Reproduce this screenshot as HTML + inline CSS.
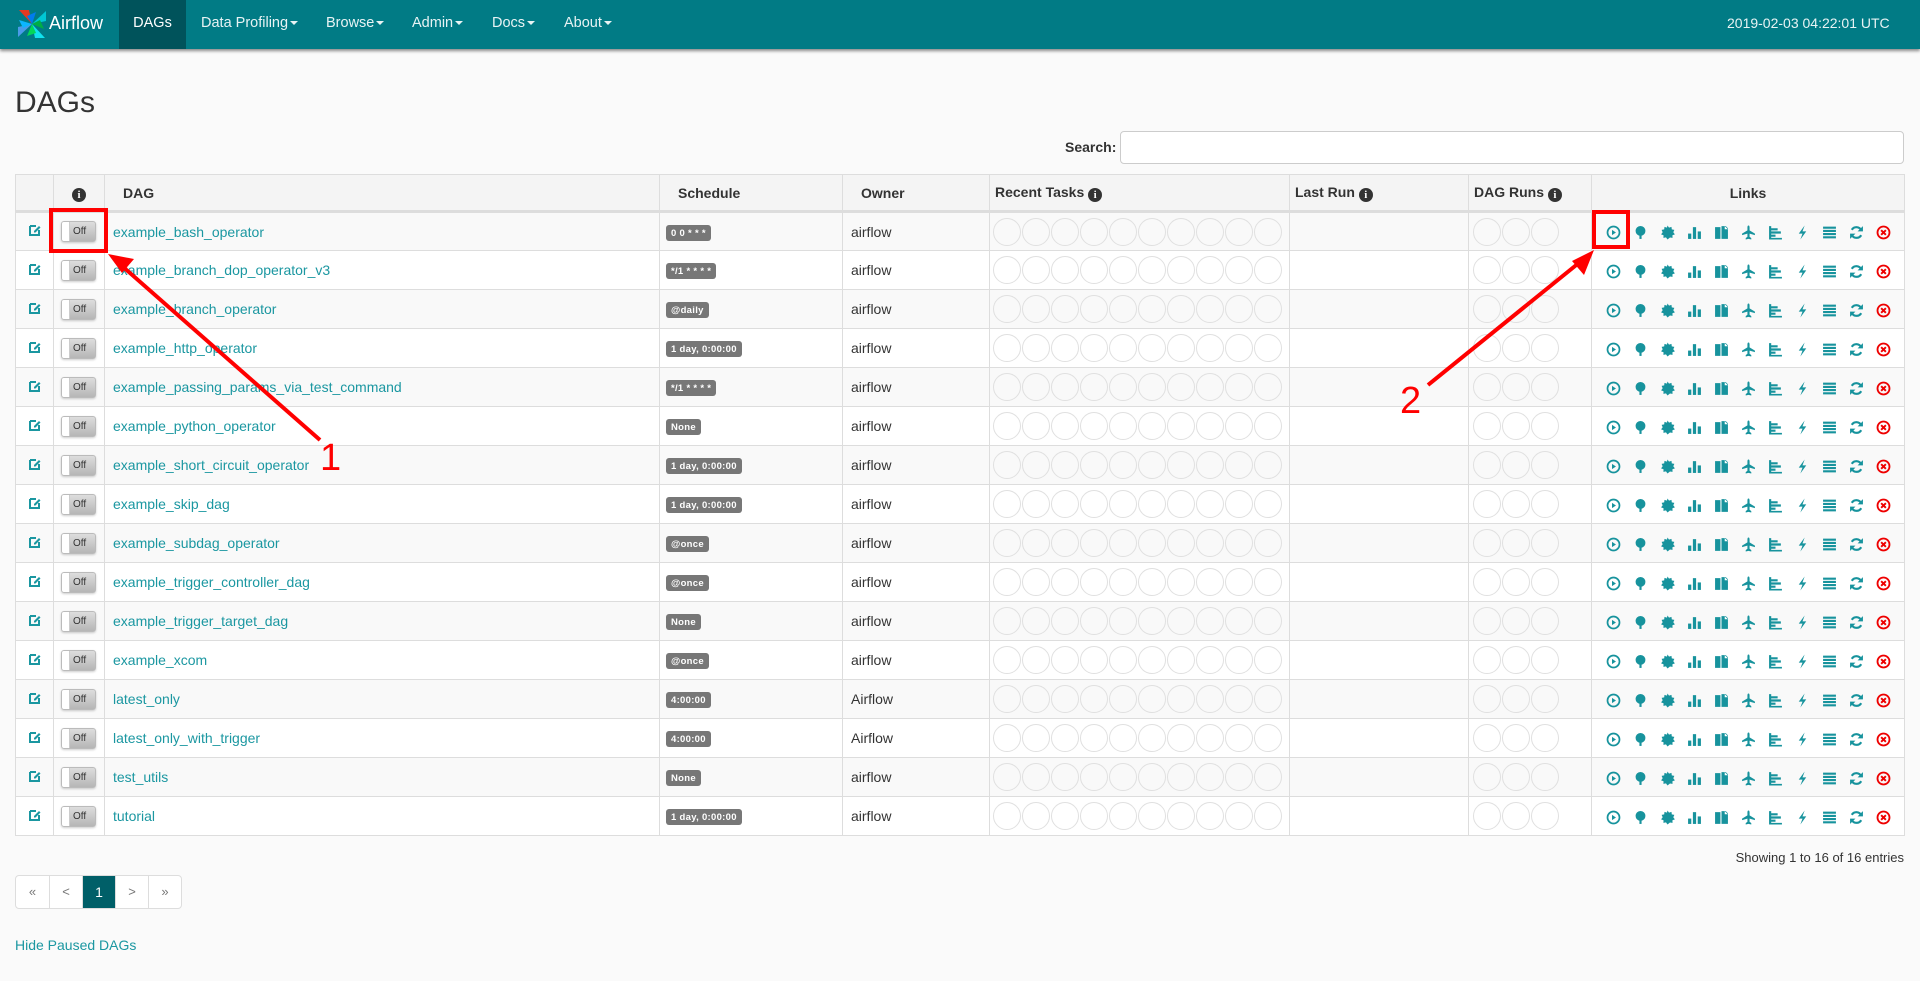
<!DOCTYPE html>
<html><head><meta charset="utf-8">
<style>
*{box-sizing:border-box}
body{margin:0;background:#fafafa;font-family:"Liberation Sans",Arial,sans-serif;font-size:14px;color:#333;width:1920px;height:981px;overflow:hidden;position:relative}
.nav{position:absolute;left:0;top:0;width:1920px;height:49px;background:#017b85;box-shadow:0 2px 3px rgba(0,0,0,.45)}
.nav a{position:absolute;top:0;height:49px;line-height:47px;color:#e8f3f4;font-size:14.5px;text-decoration:none}
.nav .act{background:#00535b;left:119px;width:67px;text-align:center;color:#fff}
.caret{display:inline-block;width:0;height:0;border-left:4px solid transparent;border-right:4px solid transparent;border-top:4px solid #e8f3f4;vertical-align:middle;margin-left:2px}
h1{position:absolute;left:15px;top:86px;margin:0;font-size:30px;font-weight:normal;color:#333}
.slabel{position:absolute;left:1065px;top:139px;font-weight:bold;font-size:14px}
.search{position:absolute;left:1120px;top:131px;width:784px;height:33px;background:#fff;border:1px solid #ccc;border-radius:4px}
table{position:absolute;left:15px;top:174px;border-collapse:collapse;table-layout:fixed;width:1889px}
th,td{border:1px solid #ddd;padding:0 8px;white-space:nowrap;overflow:hidden}
th{height:37px;background:#f4f4f4;font-size:14px;text-align:left;border-bottom:3px solid #ddd}
td{height:39px;background:#fff}
tr:nth-child(odd) td{background:#f9f9f9}
a.l{color:#1b97a1;text-decoration:none}
.tg{display:inline-block;width:35px;height:21px;margin-left:0;border:1px solid #bbb;border-radius:3px;background:linear-gradient(#ddd,#b6b6b6);position:relative;vertical-align:middle;box-shadow:0 1px 2px rgba(0,0,0,.2)}
.tg:before{content:"";position:absolute;left:0;top:0;width:7px;height:19px;background:#fff;border-right:1px solid #ccc;border-radius:2px 0 0 2px}
.tg span{position:absolute;left:11px;top:4px;font-size:10px;color:#333}
.lb{display:inline-block;background:#777;color:#fff;font-size:9.5px;font-weight:bold;padding:3px 5px 2px;border-radius:3px;letter-spacing:.3px}
.c{display:inline-block;width:28px;height:28px;border:1px solid #e0e0e0;border-radius:50%;margin-right:1px;vertical-align:middle}
.ic{display:inline-block;width:27px;text-align:center;vertical-align:middle}
.ic svg{width:15px;height:15px;vertical-align:middle}
.info{display:inline-block;width:14px;height:14px;border-radius:50%;background:#333;color:#fff;font-size:11px;font-weight:bold;text-align:center;line-height:14px;font-family:"Liberation Serif",serif;vertical-align:-1px}
.show{position:absolute;right:16px;top:850px;font-size:13px}
.pg{position:absolute;left:15px;top:875px;height:34px;display:flex;border:1px solid #ddd;border-radius:4px;background:#fff}
.pg div{width:33px;text-align:center;line-height:32px;color:#777;border-left:1px solid #ddd;font-size:13px}
.pg div:first-child{border-left:none}
.pg .a{background:#005f68;color:#fff;font-size:14px}
.hide{position:absolute;left:15px;top:937px;color:#1b97a1;font-size:14px}
</style></head><body>
<svg width="0" height="0" style="position:absolute">
<defs>
<symbol id="edit" viewBox="0 0 14 14"><path d="M2 3h6M2 3v9h9V7" fill="none" stroke="#1b97a1" stroke-width="2"/><path d="M6 8l5-5 1.5 1.5-5 5H6z" fill="#1b97a1"/></symbol>
<symbol id="i1" viewBox="0 0 14 14"><circle cx="7" cy="7" r="5.6" fill="none" stroke="#17939d" stroke-width="1.6"/><path d="M5.6 4.6v4.8L9.3 7z" fill="#17939d"/></symbol>
<symbol id="i2" viewBox="0 0 14 14"><circle cx="7" cy="5.5" r="4.6" fill="#17939d"/><rect x="6" y="8" width="2" height="5" fill="#17939d"/></symbol>
<symbol id="i3" viewBox="0 0 14 14"><path d="M7 0.5l1.4 2 2.3-.8.3 2.4 2.4.5-1 2.2 1.5 1.9-2.3.9.1 2.4-2.4-.3L7 13.5l-1.4-2-2.4.5.1-2.4-2.3-.9L2.5 6.8 1.5 4.6l2.4-.5.3-2.4 2.3.8z" fill="#17939d"/></symbol>
<symbol id="i4" viewBox="0 0 14 14"><rect x="1" y="8" width="3" height="5" fill="#17939d"/><rect x="5.5" y="2" width="3" height="11" fill="#17939d"/><rect x="10" y="6" width="3" height="7" fill="#17939d"/></symbol>
<symbol id="i5" viewBox="0 0 14 14"><path d="M1 2h5v11H1z M7 1h4l2 2v10H7z" fill="#17939d"/><path d="M10 1v3h3" fill="#fff"/></symbol>
<symbol id="i6" viewBox="0 0 14 14"><path d="M7 0.5c.8 0 1 1 1 2V5l5 3v1.5L8 8v3l1.6 1.3V13.5L7 13l-2.6.5v-1.2L6 11V8L1 9.5V8l5-3V2.5c0-1 .2-2 1-2z" fill="#17939d"/></symbol>
<symbol id="i7" viewBox="0 0 14 14"><path d="M1 1h2v12H1zM3 3h6v2H3zM3 6h9v2H3zM3 9h4v2H3zM1 12h12v1.5H1z" fill="#17939d"/></symbol>
<symbol id="i8" viewBox="0 0 14 14"><path d="M9 0.5L3.5 8H7l-2 5.5L10.5 6H7z" fill="#17939d"/></symbol>
<symbol id="i9" viewBox="0 0 14 14"><path d="M1 1.5h12v2H1zM1 4.5h12v2H1zM1 7.5h12v2H1zM1 10.5h12v2H1z" fill="#17939d"/></symbol>
<symbol id="i10" viewBox="0 0 14 14"><path d="M11.5 5A5 5 0 0 0 2.6 4.5" fill="none" stroke="#17939d" stroke-width="2"/><path d="M2.5 9a5 5 0 0 0 8.9.5" fill="none" stroke="#17939d" stroke-width="2"/><path d="M13 1v5H8z M1 13V8h5z" fill="#17939d"/></symbol>
<symbol id="i11" viewBox="0 0 14 14"><circle cx="7" cy="7" r="5.6" fill="none" stroke="#e00" stroke-width="1.7"/><path d="M4.8 4.8l4.4 4.4M9.2 4.8l-4.4 4.4" stroke="#e00" stroke-width="1.8"/></symbol>
</defs></svg>

<div class="nav">
<svg style="position:absolute;left:16px;top:8px" width="32" height="32" viewBox="0 0 32 32"><path d="M16 16L3 2l10 0z" fill="#e43921"/><path d="M16 16L30 3v10z" fill="#00c7d4"/><path d="M16 16L29 30H19z" fill="#11e1ee"/><path d="M16 16L2 29V19z" fill="#4a9be8"/><path d="M16 16L3 12l4 8z" fill="#0cb6ff"/><path d="M16 16l12 5-4-9z" fill="#00ad46"/><path d="M16 16l-5 12 9-3z" fill="#04d659"/><path d="M16 16l4-12-9 4z" fill="#017cee"/></svg>
<a style="left:49px;font-size:18px;color:#fff">Airflow</a>
<a class="act">DAGs</a>
<a style="left:201px">Data Profiling<span class="caret"></span></a>
<a style="left:326px">Browse<span class="caret"></span></a>
<a style="left:412px">Admin<span class="caret"></span></a>
<a style="left:492px">Docs<span class="caret"></span></a>
<a style="left:564px">About<span class="caret"></span></a>
<a style="left:1727px;font-size:14px">2019-02-03 04:22:01 UTC</a>
</div>

<h1>DAGs</h1>
<div class="slabel">Search:</div>
<div class="search"></div>

<table>
<colgroup><col style="width:38px"><col style="width:51px"><col style="width:555px"><col style="width:183px"><col style="width:147px"><col style="width:300px"><col style="width:179px"><col style="width:123px"><col style="width:313px"></colgroup>
<tr><th></th><th style="text-align:center"><span class="info">i</span></th><th style="padding-left:18px">DAG</th><th style="padding-left:18px">Schedule</th><th style="padding-left:18px">Owner</th><th style="padding-left:5px">Recent Tasks <span class="info">i</span></th><th style="padding-left:5px">Last Run <span class="info">i</span></th><th style="padding-left:5px">DAG Runs <span class="info">i</span></th><th style="text-align:center">Links</th></tr>
<tbody id="tb"></tbody>
</table>

<div class="show">Showing 1 to 16 of 16 entries</div>
<div class="pg"><div>«</div><div>&lt;</div><div class="a">1</div><div>&gt;</div><div>»</div></div>
<div class="hide">Hide Paused DAGs</div>

<svg style="position:absolute;left:0;top:0" width="1920" height="981">
<rect x="51" y="210" width="55" height="41" fill="none" stroke="#f00" stroke-width="4"/>
<line x1="320" y1="440" x2="122" y2="266" stroke="#f00" stroke-width="4"/>
<path d="M108 254l26 5-12 14z" fill="#f00"/>
<text x="320" y="470" font-family="Liberation Sans" font-size="38" fill="#f00">1</text>
<rect x="1594" y="212" width="34" height="35" fill="none" stroke="#f00" stroke-width="4"/>
<line x1="1428" y1="385" x2="1580" y2="262" stroke="#f00" stroke-width="4"/>
<path d="M1594 250l-10 25-12-14z" fill="#f00"/>
<text x="1400" y="413" font-family="Liberation Sans" font-size="38" fill="#f00">2</text>
</svg>

<script>
var d=[["example_bash_operator","0 0 * * *","airflow"],["example_branch_dop_operator_v3","*/1 * * * *","airflow"],["example_branch_operator","@daily","airflow"],["example_http_operator","1 day, 0:00:00","airflow"],["example_passing_params_via_test_command","*/1 * * * *","airflow"],["example_python_operator","None","airflow"],["example_short_circuit_operator","1 day, 0:00:00","airflow"],["example_skip_dag","1 day, 0:00:00","airflow"],["example_subdag_operator","@once","airflow"],["example_trigger_controller_dag","@once","airflow"],["example_trigger_target_dag","None","airflow"],["example_xcom","@once","airflow"],["latest_only","4:00:00","Airflow"],["latest_only_with_trigger","4:00:00","Airflow"],["test_utils","None","airflow"],["tutorial","1 day, 0:00:00","airflow"]];
var h="",c10="",c3="",ic="";
for(var i=0;i<10;i++)c10+='<span class="c"></span>';
for(i=0;i<3;i++)c3+='<span class="c"></span>';
for(i=1;i<=11;i++)ic+='<span class="ic"><svg><use href="#i'+i+'"/></svg></span>';
d.forEach(function(r){h+='<tr><td style="text-align:center;padding:0"><svg width="14" height="14"><use href="#edit"/></svg></td><td style="padding:0 0 0 7px"><span class="tg"><span>Off</span></span></td><td style="padding-left:8px"><a class="l">'+r[0]+'</a></td><td style="padding-left:6px"><span class="lb">'+r[1]+'</span></td><td style="padding-left:8px">'+r[2]+'</td><td style="padding:0 0 0 3px">'+c10+'</td><td></td><td style="padding:0 0 0 4px">'+c3+'</td><td style="padding:0 0 0 8px">'+ic+'</td></tr>';});
document.getElementById("tb").innerHTML=h;
</script>
</body></html>
